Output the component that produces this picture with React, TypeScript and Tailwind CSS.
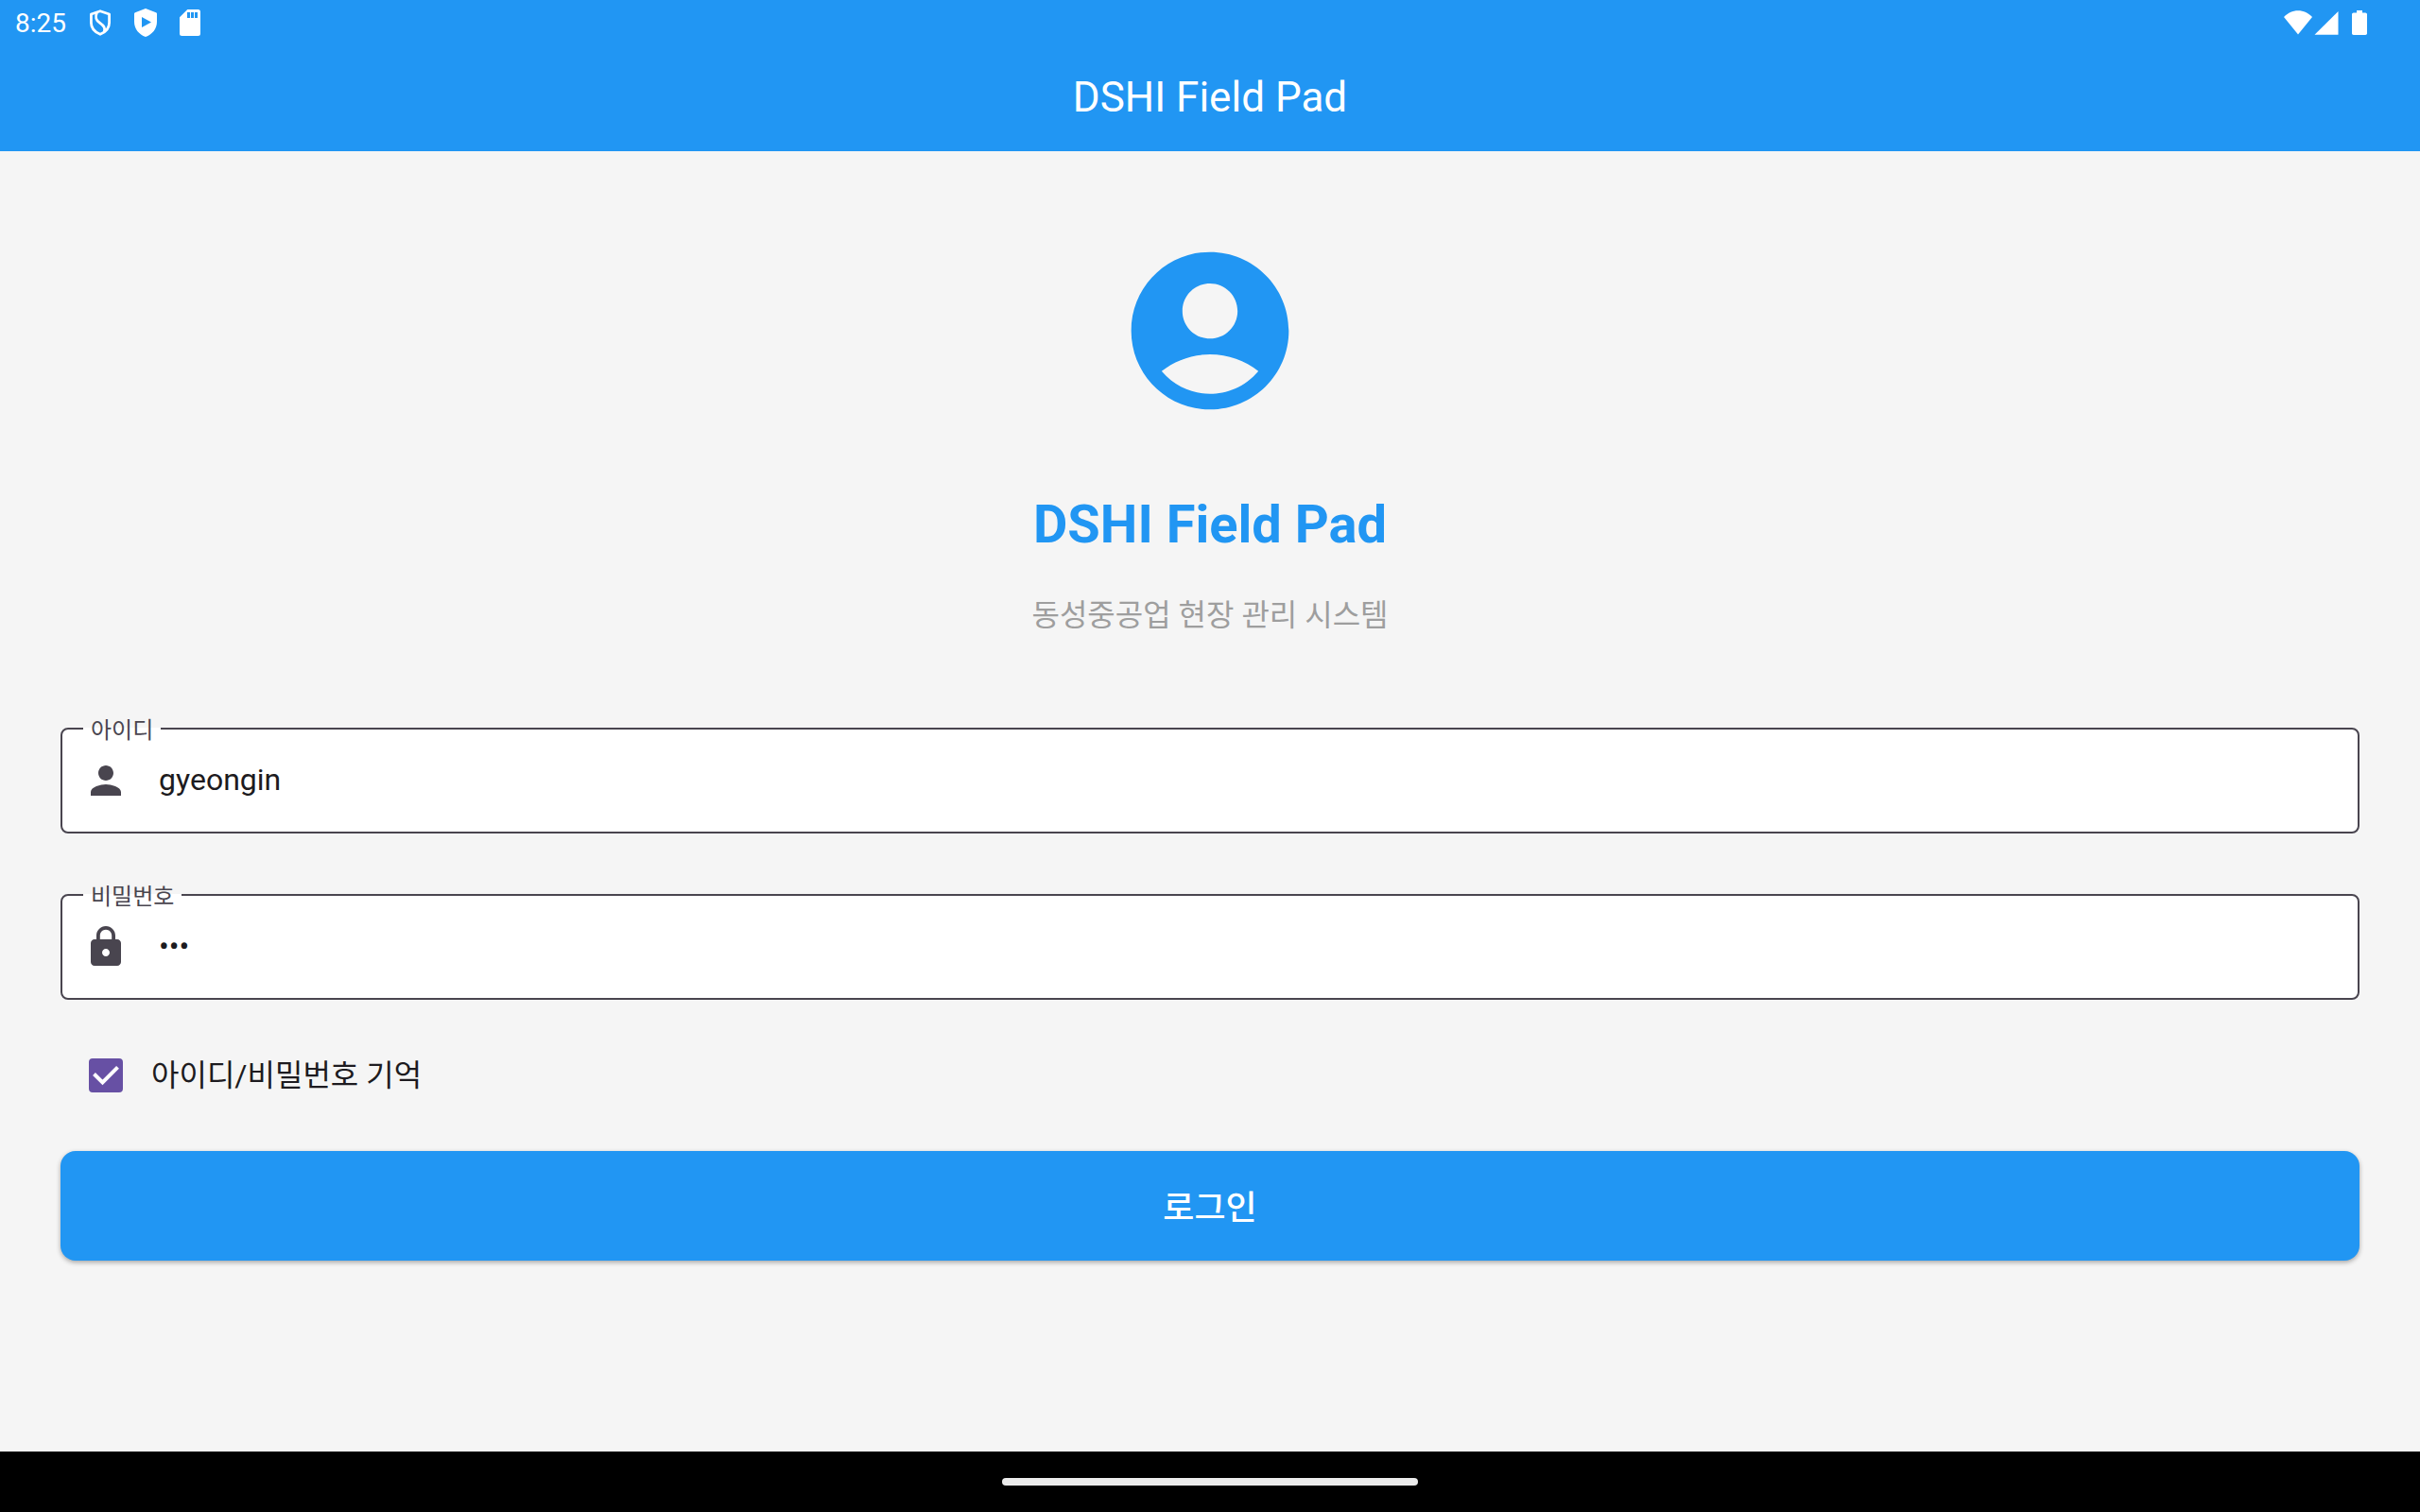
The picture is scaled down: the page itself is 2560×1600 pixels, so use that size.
import { useState } from "react";
import type { ReactNode } from "react";

const FONT = "font-['Roboto','Noto_Sans_CJK_KR',sans-serif]";

function ShieldOutlineIcon() {
  return (
    <svg className="h-7 w-6" viewBox="0 0 24 28" fill="none" stroke="white" strokeWidth="2.8" aria-hidden="true">
      <path d="M12 1.700 21.600 5v9c0 5.600-4 10-9.600 12.300C6.400 24 2.400 19.600 2.400 14V5z" strokeLinejoin="round" />
      <path d="M8.500 3.200C6.500 8 7 11 11.500 14.200s6 5.300 4.800 9.300" />
    </svg>
  );
}

function ShieldPlayIcon() {
  return (
    <svg className="h-[30px] w-6" viewBox="0 0 24 30" aria-hidden="true">
      <path
        fill="white"
        fillRule="evenodd"
        d="M12 0 23 4.200c.6.200 1 .8 1 1.400V14c0 7.500-5 13.500-12 16C5 27.500 0 21.500 0 14V5.600C0 5 .4 4.400 1 4.200zM8 9v11l10-5.500z"
      />
    </svg>
  );
}

function SdCardIcon() {
  return (
    <svg className="h-7 w-[22px]" viewBox="0 0 22 28" aria-hidden="true">
      <path
        fill="white"
        fillRule="evenodd"
        d="M8.300 0H19.500A2.500 2.500 0 0 1 22 2.500v23a2.500 2.500 0 0 1-2.500 2.500h-17A2.500 2.500 0 0 1 0 25.500V8.300zM8 3v6h3V3zm4 0v6h3V3zm4 0v6h3V3z"
      />
    </svg>
  );
}

function WifiIcon() {
  return (
    <svg className="h-[26px] w-[30px]" viewBox="0 0 30 26" fill="white" aria-hidden="true">
      <path d="M15 25.500 0 7C4 2.800 9.200.3 15 .3S26 2.800 30 7z" />
    </svg>
  );
}

function SignalIcon() {
  return (
    <svg className="h-[26px] w-[26px]" viewBox="0 0 26 26" fill="white" aria-hidden="true">
      <path d="M25.500 1v24.700H.5z" />
    </svg>
  );
}

function BatteryIcon() {
  return (
    <svg className="h-[26px] w-4" viewBox="0 0 16 26" fill="white" aria-hidden="true">
      <path d="M5 0h6v2.500h3.300c.9 0 1.700.8 1.700 1.700v20.100c0 .9-.8 1.700-1.700 1.700H1.700C.8 26 0 25.200 0 24.300V4.200c0-.9.8-1.700 1.700-1.700H5z" />
    </svg>
  );
}

function AccountIcon() {
  return (
    <svg className="size-50 text-[#2196f3]" viewBox="0 0 24 24" fill="currentColor" aria-hidden="true">
      <path d="M12 2C6.480 2 2 6.480 2 12s4.480 10 10 10 10-4.480 10-10S17.520 2 12 2zm0 4c1.930 0 3.500 1.570 3.500 3.500S13.930 13 12 13s-3.500-1.570-3.500-3.500S10.070 6 12 6zm0 14c-2.030 0-4.430-.82-6.140-2.880C7.550 15.800 9.680 15 12 15s4.450.8 6.140 2.120C16.430 19.180 14.030 20 12 20z" />
    </svg>
  );
}

function PersonIcon() {
  return (
    <svg className="size-12 shrink-0" viewBox="0 0 24 24" fill="currentColor" aria-hidden="true">
      <path d="M12 12c2.210 0 4-1.790 4-4s-1.790-4-4-4-4 1.790-4 4 1.790 4 4 4zm0 2c-2.670 0-8 1.340-8 4v2h16v-2c0-2.660-5.330-4-8-4z" />
    </svg>
  );
}

function LockIcon() {
  return (
    <svg className="size-12 shrink-0" viewBox="0 0 24 24" fill="currentColor" aria-hidden="true">
      <path d="M18 8h-1V6c0-2.760-2.240-5-5-5S7 3.240 7 6v2H6c-1.100 0-2 .9-2 2v10c0 1.100.9 2 2 2h12c1.100 0 2-.9 2-2V10c0-1.100-.9-2-2-2zm-6 9c-1.100 0-2-.9-2-2s.9-2 2-2 2 .9 2 2-.9 2-2 2zm3.100-9H8.900V6c0-1.710 1.390-3.100 3.100-3.100s3.100 1.390 3.100 3.100v2z" />
    </svg>
  );
}

type FieldProps = {
  id: string;
  label: string;
  type: string;
  value: string;
  onChange: (value: string) => void;
  icon: ReactNode;
};

function Field({ id, label, type, value, onChange, icon }: FieldProps) {
  return (
    <fieldset className="rounded-lg border-2 border-[#49454f] bg-white px-[22px] pb-[13px] text-[#49454f]">
      <legend className="px-2 pt-1 text-2xl/6">
        <label htmlFor={id}>{label}</label>
      </legend>
      <div className="flex h-[82px] items-center gap-8">
        {icon}
        <input
          id={id}
          type={type}
          value={value}
          onChange={(e) => onChange(e.target.value)}
          className="min-w-0 flex-1 bg-transparent pb-0.5 text-[32px]/12 text-[#1d1b20] outline-none"
        />
      </div>
    </fieldset>
  );
}

export default function App() {
  const [user, setUser] = useState("gyeongin");
  const [password, setPassword] = useState("123");
  const [remember, setRemember] = useState(true);

  return (
    <div className={`flex min-h-screen flex-col bg-[#f5f5f5] ${FONT}`}>
      <header className="bg-[#2196f3] text-white">
        <div className="flex h-12 items-center justify-between pr-14 pl-4">
          <div className="flex items-center gap-6">
            <span className="pt-0.5 text-[28px]/8">8:25</span>
            <ShieldOutlineIcon />
            <ShieldPlayIcon />
            <SdCardIcon />
          </div>
          <div className="flex items-center gap-0.5">
            <WifiIcon />
            <SignalIcon />
            <span className="ml-3 flex">
              <BatteryIcon />
            </span>
          </div>
        </div>
        <div className="flex h-28 items-center justify-center pb-0.5">
          <h1 className="text-[44px]/14">DSHI Field Pad</h1>
        </div>
      </header>

      <main className="flex flex-1 flex-col px-16 pt-[90px] pb-16">
        <div className="flex flex-col items-center">
          <AccountIcon />
          <h2 className="mt-[65px] text-[56px]/20 font-bold text-[#2196f3]">DSHI Field Pad</h2>
          <p className="mt-8 text-[32px]/12 text-[#9e9e9e]">동성중공업 현장 관리 시스템</p>
        </div>

        <form className="mt-[82px] flex flex-col" onSubmit={(e) => e.preventDefault()}>
          <div className="flex flex-col gap-[51px]">
            <Field id="user" label="아이디" type="text" value={user} onChange={setUser} icon={<PersonIcon />} />
            <Field
              id="password"
              label="비밀번호"
              type="password"
              value={password}
              onChange={setPassword}
              icon={<LockIcon />}
            />
          </div>

          <label className="mt-14 flex items-center gap-[30px] self-start pl-[30px] text-[32px]/12 text-[#1d1b20]">
            <span className="grid size-9">
              <input
                type="checkbox"
                checked={remember}
                onChange={(e) => setRemember(e.target.checked)}
                className="col-start-1 row-start-1 size-9 appearance-none rounded-sm border-4 border-[#49454f] checked:border-[#6750a4] checked:bg-[#6750a4]"
              />
              {remember && (
                <svg
                  className="pointer-events-none col-start-1 row-start-1 size-9"
                  viewBox="0 0 36 36"
                  fill="none"
                  stroke="white"
                  strokeWidth="4"
                  aria-hidden="true"
                >
                  <path d="m5.500 16.500 9 9L30.500 9.300" />
                </svg>
              )}
            </span>
            아이디/비밀번호 기억
          </label>

          <button
            type="submit"
            className="mt-14 h-[116px] rounded-2xl bg-[#2196f3] pt-1.5 text-4xl font-medium text-white shadow-[0_2px_5px_rgba(0,0,0,0.32)]"
          >
            로그인
          </button>
        </form>
      </main>

      <footer className="flex h-16 items-center justify-center bg-black">
        <div className="h-2 w-[440px] rounded-full bg-[#ebebeb]" />
      </footer>
    </div>
  );
}
